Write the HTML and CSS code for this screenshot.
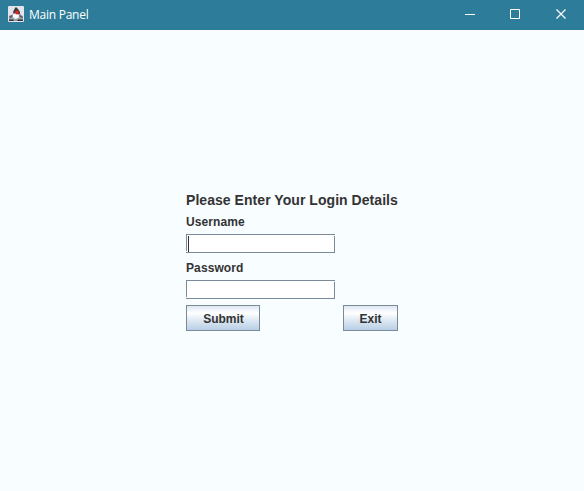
FILE: index.html
```html
<!DOCTYPE html>
<html lang="en">
<head>
<meta charset="utf-8">
<title>Main Panel</title>
<link rel="stylesheet" href="styles.css">
</head>
<body>
<header class="titlebar">
  <svg class="app-icon" width="16" height="16" viewBox="0 0 16 16">
    <rect width="16" height="16" rx="1" fill="#e2e5ea"/>
    <path d="M1 15V11L4 9L6 6L11 6L13 9L15 10V15Z" fill="#9a9fa8"/>
    <path d="M5 6L7 2L8 1L10 3L12 6L12 8L6 8Z" fill="#3a3d44"/>
    <path d="M5 8L8 7L11 9L10.500 12L7 13L5 11Z" fill="#fafafa"/>
    <path d="M1 10L4 9L4 11L2 12ZM11 9L14 10L15 12L12 11Z" fill="#555b64"/>
    <path d="M1 13.500H5L6 15H1ZM10 13.500H15V15H9Z" fill="#30343b"/>
    <circle cx="9" cy="6.500" r="2" fill="#d92626"/>
  </svg>
  <span class="title">Main Panel</span>
  <svg class="controls" width="104" height="12" viewBox="0 0 104 12" fill="none" stroke="#fff">
    <path d="M0 6.500H10M45.500 1.500H54.500V10.500H45.500Z"/>
    <path d="M91.500 1.500L100.500 10.500M100.500 1.500L91.500 10.500" stroke-width="1.200"/>
  </svg>
</header>
<main class="panel">
  <form class="login">
    <h1 class="heading">Please Enter Your Login Details</h1>
    <label class="label" for="user">Username</label>
    <div class="field focused"><input id="user" type="text"></div>
    <label class="label" for="pass">Password</label>
    <div class="field"><input id="pass" type="password"></div>
    <div class="actions">
      <button class="button submit" type="button">Submit</button>
      <button class="button exit" type="button">Exit</button>
    </div>
  </form>
</main>
</body>
</html>
```
FILE: styles.css
```css
* { box-sizing: border-box; }
body {
  margin: 0;
  height: 491px;
  overflow: hidden;
  display: flex;
  flex-direction: column;
  background: #f8fdff;
  color: #333;
  font-family: "Liberation Sans", Arial, sans-serif;
}
.titlebar {
  height: 30px;
  flex: none;
  display: flex;
  align-items: center;
  padding: 0 15px 2px 8px;
  background: #2d7d9a;
  color: #fff;
}
.title {
  margin-left: 5px;
  font: 12px/16px "Open Sans", sans-serif;
  letter-spacing: -0.25px;
  padding-top: 2px;
}
.controls { margin-left: auto; }
.panel {
  flex: 1;
  display: flex;
  justify-content: center;
  padding-top: 160px;
}
.login { width: 212px; }
.heading {
  margin: 0 0 1px;
  font-size: 14px;
  line-height: 20px;
  letter-spacing: 0.05px;
  white-space: nowrap;
}
.label {
  display: block;
  height: 23px;
  font-size: 12px;
  line-height: 23px;
  font-weight: bold;
  letter-spacing: 0.1px;
}
.field {
  position: relative;
  width: 149px;
  height: 19px;
  margin-bottom: 4px;
  border: 1px solid #7a8a99;
  background: #fff;
}
.field input {
  display: block;
  width: 100%;
  height: 100%;
  padding: 0 2px;
  border: 0;
  outline: 0;
  background: transparent;
}
.field::before, .field::after {
  content: "";
  position: absolute;
  width: 1px;
  height: 1px;
  background: #f8fdff;
}
.field::before { right: -1px; top: 0; }
.field::after { left: -1px; bottom: 0; }
.focused input { border-left: 1px solid #333; height: 16px; margin: 1px 0 0 1px; width: 145px; }
.actions {
  display: flex;
  justify-content: space-between;
  margin-top: 6px;
}
.button {
  height: 26px;
  padding: 2px 0 0;
  border: 1px solid #7a8a99;
  border-radius: 0;
  background: linear-gradient(#dde8f3 0, #fff 30%, #dde8f3 60%, #b8cfe5 100%);
  color: #333;
  font: bold 12px/22px "Liberation Sans", Arial, sans-serif;
}
.submit { width: 74px; padding-left: 1px; }
.exit { width: 55px; }
```
